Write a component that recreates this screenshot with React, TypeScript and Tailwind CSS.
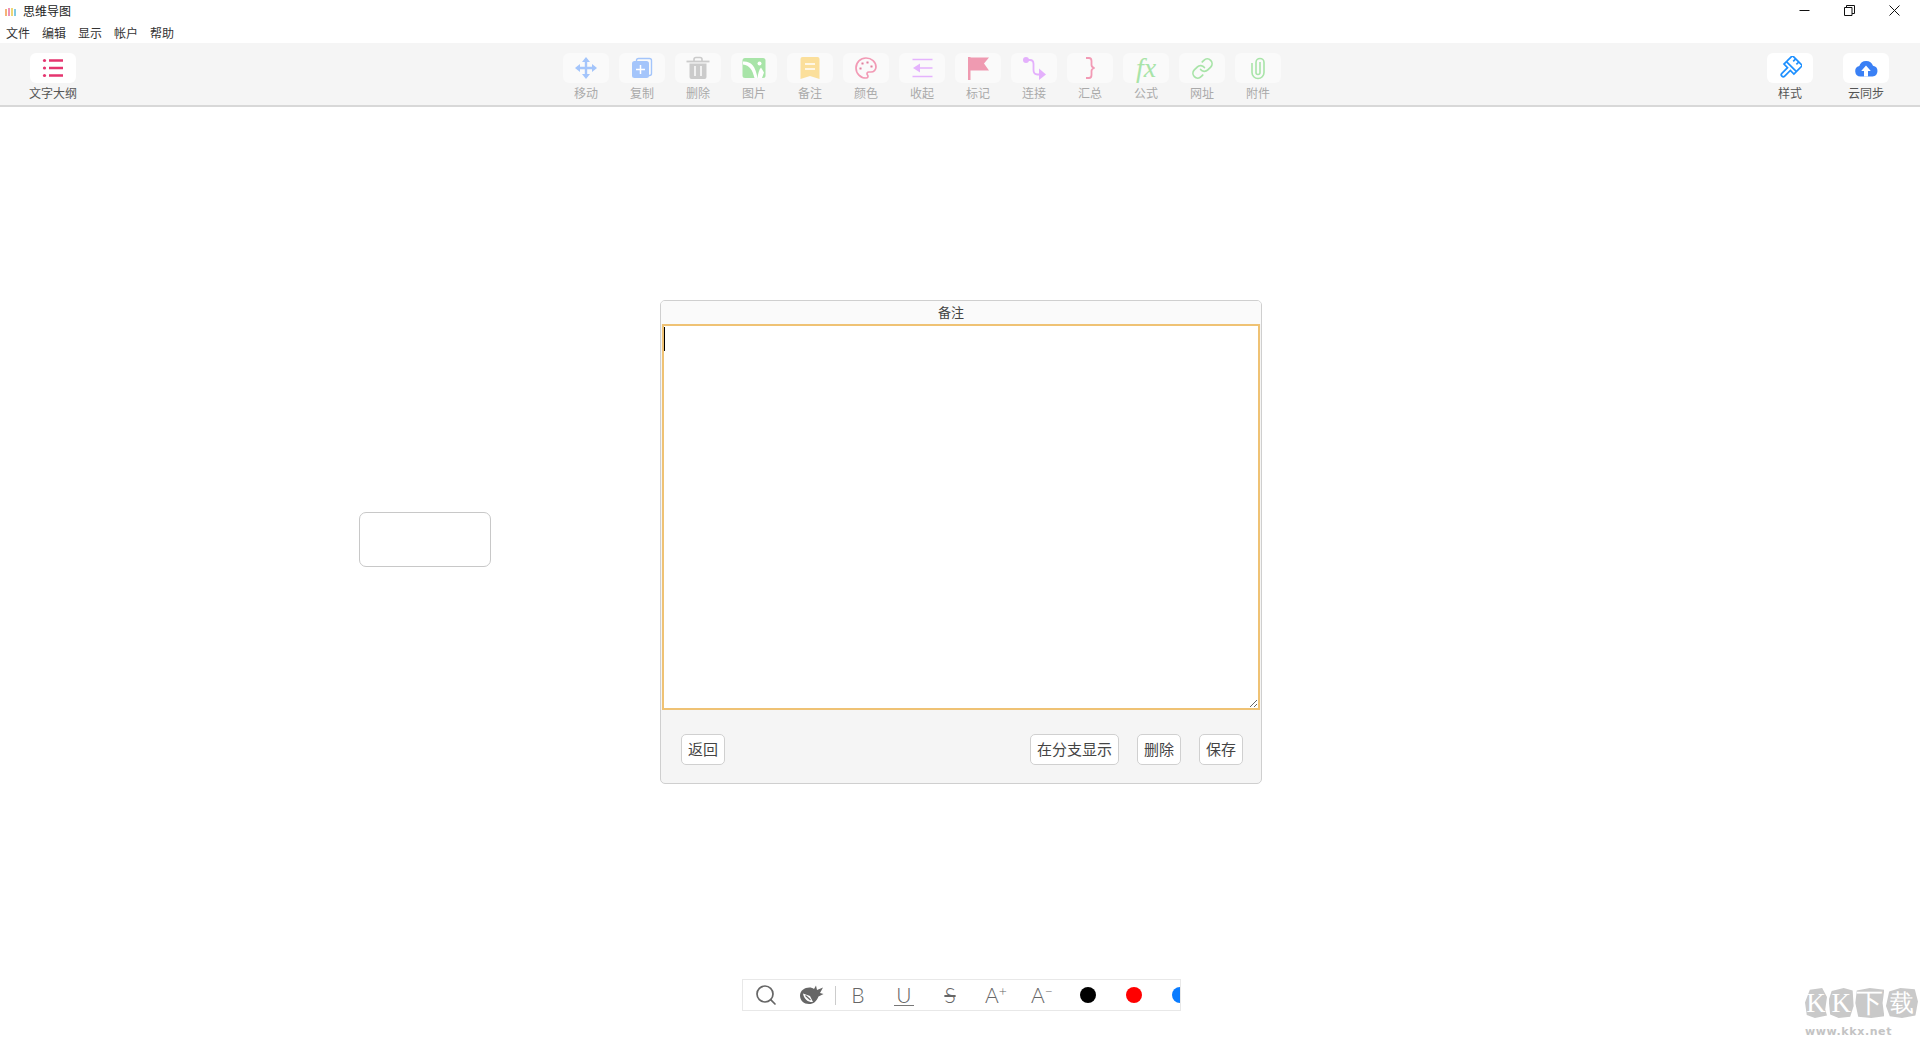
import { ReactNode } from 'react';
import { Link, Palette, Search } from 'lucide-react';

const menus = ['文件', '编辑', '显示', '帐户', '帮助'];

function Tool({ label, icon, active }: { label: string; icon: ReactNode; active?: boolean }) {
  return (
    <div className="flex w-[46px] flex-col items-center">
      <div className={`flex h-[30px] w-[46px] items-center justify-center rounded-[6px] ${active ? 'bg-white' : 'bg-[#fafafa]'}`}>
        {icon}
      </div>
      <span className={`mt-[1px] whitespace-nowrap text-[12px] leading-[18px] ${active ? 'text-[#555]' : 'text-[#aaa]'}`}>
        {label}
      </span>
    </div>
  );
}

const Svg = ({ children }: { children: ReactNode }) => (
  <svg width="24" height="24" viewBox="0 0 24 24" fill="none">{children}</svg>
);

const ListIcon = () => (
  <Svg>
    <path d="M8 4.500h14M8 12h14M8 19.500h14" stroke="#e5356f" strokeWidth="2.600" />
    <circle cx="3.500" cy="4.500" r="1.600" fill="#e5356f" />
    <circle cx="3.500" cy="12" r="1.600" fill="#e5356f" />
    <circle cx="3.500" cy="19.500" r="1.600" fill="#e5356f" />
  </Svg>
);

const MoveIcon = () => (
  <Svg>
    <path d="M12 3v18M3 12h18" stroke="#a4c5fb" strokeWidth="2.400" />
    <path d="M12 1l4 5H8zM12 23l-4-5h8zM1 12l5-4v8zM23 12l-5 4V8z" fill="#a4c5fb" />
  </Svg>
);

const CopyIcon = () => (
  <Svg>
    <rect x="6.500" y="2.500" width="15" height="17" rx="2" stroke="#a4c5fb" strokeWidth="1.400" />
    <rect x="2" y="5" width="17" height="17" rx="2.500" fill="#a4c5fb" />
    <path d="M10.500 9v9M6 13.500h9" stroke="#fff" strokeWidth="1.500" />
  </Svg>
);

const TrashIcon = () => (
  <Svg>
    <path d="M8 5V3.500C8 2 9 1.500 10 1.500h4c1 0 2 .5 2 2V5" stroke="#cbcbcb" strokeWidth="1.600" />
    <path d="M0.500 5.500h23" stroke="#cbcbcb" strokeWidth="1.800" />
    <path d="M3.500 7.500h17V21a2 2 0 0 1-2 2h-13a2 2 0 0 1-2-2z" fill="#cbcbcb" />
    <path d="M9 10v10M15 10v10" stroke="#fafafa" strokeWidth="1.600" />
  </Svg>
);

const ImageIcon = () => (
  <Svg>
    <rect x="0.500" y="2" width="23" height="20" rx="2.500" fill="#a8e4a8" />
    <path d="M1 5.500c7.500-.5 12.500 4 14.500 16.500h-3C10.500 14 7.500 9 1 8.500z" fill="#fff" />
    <path d="M15.500 22c.5-4.500 1.500-8 3.500-10.500l3 5-2 5.500z" fill="#fff" />
    <circle cx="17.500" cy="7.500" r="2" fill="#fff" />
  </Svg>
);

const NoteIcon = () => (
  <Svg>
    <path d="M2.500 3a2 2 0 0 1 2-2h15a2 2 0 0 1 2 2v20L12 20l-9.500 3z" fill="#fbdf9b" />
    <path d="M7 8h10M7 13h10" stroke="#fff" strokeWidth="1.500" />
  </Svg>
);

const CollapseIcon = () => (
  <Svg>
    <path d="M2.500 3.500h20M10 12h12.500M2.500 20.500h20" stroke="#e5b3fd" strokeWidth="1.700" />
    <path d="M3 12l7-4.500v9z" fill="#e5b3fd" />
  </Svg>
);

const FlagIcon = () => (
  <Svg>
    <path d="M2 1h2.500v23H2z" fill="#ef9ab1" />
    <path d="M4 1.500h19l-5 6 5 7H4z" fill="#ef9ab1" />
  </Svg>
);

const ConnectIcon = () => (
  <Svg>
    <circle cx="4" cy="4" r="3" fill="#e4b0fc" />
    <path d="M4 4h4c3 0 3.500 2 3.500 4v6c0 3 1.500 4.500 4 4.500h3" stroke="#e4b0fc" strokeWidth="1.800" />
    <path d="M17 12.500l7 6-7 5.500z" fill="#e4b0fc" />
  </Svg>
);

const BraceIcon = () => (
  <Svg>
    <path d="M8 2h3c2 0 2.500 1.500 2.500 3v4c0 1.500 1 2.500 3 3-2 .5-3 1.500-3 3v4c0 1.500-.5 3-2.500 3H8" stroke="#f29ab5" strokeWidth="1.800" />
  </Svg>
);

const ClipIcon = () => (
  <Svg>
    <path d="M6 7v9.500a6 6 0 0 0 12 0V6.500a4 4 0 0 0-8 0v10a2 2 0 0 0 4 0V6" stroke="#a8e4a8" strokeWidth="1.600" />
  </Svg>
);

const BrushIcon = () => (
  <Svg>
    <g transform="rotate(45 12 12) translate(0 1.500)" stroke="#1e90ff" strokeWidth="1.700">
      <rect x="5" y="0" width="14" height="8.500" rx="1" />
      <path d="M5 8.500V12h5v8a2 2 0 0 0 4 0v-8h5V8.500M9.500 0v3.500M14 0v3.500" />
    </g>
  </Svg>
);

const CloudIcon = () => (
  <Svg>
    <path d="M6.500 20.500a5.300 5.300 0 0 1-1.200-10.460A7.200 7.200 0 0 1 19 9.800a5.400 5.400 0 0 1-.5 10.700z" fill="#3a80f5" />
    <path d="M12 9.500l4.800 5.500h-2.800v5.500h-4V15H7.200z" fill="#fff" />
  </Svg>
);

const EraserIcon = () => (
  <svg width="26" height="20" viewBox="0 0 26 20" fill="none">
    <path d="M1 10.500C1 5.500 5.500 2.500 10.500 2.500c2 0 3 .5 4.500 1.500L17 0.500l1 4.500 6-2.500-3 5.500 3.500 1-5 2.500c-2 5-5 7.500-9.500 7.500C5 19 1 15.500 1 10.500z" fill="#666" />
    <path d="M4 8.500l7 2.500 3 6c-4 .5-9-2-10-8.500z" fill="#fff" />
    <path d="M6.500 10.500l5 4.500" stroke="#666" strokeWidth="1.200" />
  </svg>
);

const BottomCell = ({ children }: { children: ReactNode }) => (
  <div className="flex h-full w-[46px] shrink-0 items-center justify-center text-[#666]">{children}</div>
);

export default function App() {
  return (
    <div className="flex h-[1040px] w-[1920px] flex-col overflow-hidden bg-white font-['Noto_Sans_CJK_SC','Noto_Sans',sans-serif] text-[12px] text-[#333]">
      {/* title + menu */}
      <div className="relative h-[22px] shrink-0">
        <div className="flex h-full items-center pl-[5px]">
          <svg width="11" height="9" viewBox="0 0 11 9" fill="none">
            <path d="M1 9V2" stroke="#f29a4a" strokeWidth="1.500" />
            <path d="M4 9V1" stroke="#e86fa0" strokeWidth="1.500" />
            <path d="M7 9V1" stroke="#e8c84a" strokeWidth="1.500" />
            <path d="M10 9V2" stroke="#58b8d8" strokeWidth="1.500" />
          </svg>
          <span className="ml-[7px] leading-[22px] text-[#222]">思维导图</span>
        </div>
        <div className="absolute right-[3px] top-0 flex h-[21px]">
          <div className="flex w-[45px] items-center justify-center">
            <svg width="11" height="11" viewBox="0 0 11 11"><path d="M0.500 5.500h10" stroke="#111" /></svg>
          </div>
          <div className="flex w-[45px] items-center justify-center">
            <svg width="11" height="11" viewBox="0 0 11 11" fill="none">
              <path d="M0.500 2.500h7.500v8H0.500z" stroke="#111" />
              <path d="M2.500 2.500V0.500h8v8H8" stroke="#111" />
            </svg>
          </div>
          <div className="flex w-[45px] items-center justify-center">
            <svg width="11" height="11" viewBox="0 0 11 11"><path d="M0.500 0.500l10 10M10.500 0.500l-10 10" stroke="#111" /></svg>
          </div>
        </div>
      </div>
      <div className="flex h-[21px] shrink-0 items-center gap-[12px] pl-[6px]">
        {menus.map(m => <span key={m} className="leading-[22px]">{m}</span>)}
      </div>

      {/* toolbar */}
      <div className="flex h-[64px] shrink-0 border-b-2 border-[#d8d8d8] bg-[#f5f5f5] pl-[30px] pt-[10px]">
        <Tool active label="文字大纲" icon={<ListIcon />} />
        <div className="ml-[487px] flex gap-[10px]">
          <Tool label="移动" icon={<MoveIcon />} />
          <Tool label="复制" icon={<CopyIcon />} />
          <Tool label="删除" icon={<TrashIcon />} />
          <Tool label="图片" icon={<ImageIcon />} />
          <Tool label="备注" icon={<NoteIcon />} />
          <Tool label="颜色" icon={<Palette size={24} color="#f29ab5" strokeWidth={1.7} />} />
          <Tool label="收起" icon={<CollapseIcon />} />
          <Tool label="标记" icon={<FlagIcon />} />
          <Tool label="连接" icon={<ConnectIcon />} />
          <Tool label="汇总" icon={<BraceIcon />} />
          <Tool label="公式" icon={<span className="font-['Liberation_Serif',serif] text-[28px] italic leading-none text-[#a8e4a8]">fx</span>} />
          <Tool label="网址" icon={<Link size={23} color="#a8e4a8" strokeWidth={1.8} />} />
          <Tool label="附件" icon={<ClipIcon />} />
        </div>
        <div className="ml-auto flex gap-[30px] pr-[31px]">
          <Tool active label="样式" icon={<BrushIcon />} />
          <Tool active label="云同步" icon={<CloudIcon />} />
        </div>
      </div>

      {/* canvas */}
      <div className="relative flex-1">
        <div className="absolute left-[359px] top-[405px] h-[55px] w-[132px] rounded-[7px] border-[1.5px] border-[#c8c8c8] bg-white" />

        {/* note dialog */}
        <div className="absolute left-[660px] top-[193px] flex h-[484px] w-[602px] flex-col overflow-hidden rounded-[5px] border border-[#cfcfcf] bg-[#f5f5f5]">
          <div className="flex h-[23px] shrink-0 items-center justify-center bg-[#fafafa] pb-px pr-[20px] text-[13px] text-[#444]">备注</div>
          <div className="relative h-[386px] shrink-0 px-px">
            <textarea className="block h-[386px] w-[598px] border-2 border-[#efc274] bg-white caret-transparent outline-none" />
            <span className="absolute left-[3px] top-[3px] h-[24px] w-px bg-black" />
          </div>
          <div className="flex flex-1 items-center pl-[20px] pr-[18px] pt-[5px] text-[15px] text-[#444]">
            <button className="h-[31px] rounded-[5px] border border-[#d0d0d0] bg-white px-[6px]">返回</button>
            <button className="ml-auto h-[31px] rounded-[5px] border border-[#d0d0d0] bg-white px-[6px]">在分支显示</button>
            <button className="ml-[18px] h-[31px] rounded-[5px] border border-[#d0d0d0] bg-white px-[6px]">删除</button>
            <button className="ml-[18px] h-[31px] rounded-[5px] border border-[#d0d0d0] bg-white px-[6px]">保存</button>
          </div>
        </div>

        {/* text format bar */}
        <div className="absolute left-[742px] top-[872px] flex h-[32px] w-[439px] overflow-hidden border border-[#e8e8e8] bg-white">
          <BottomCell><Search size={24} strokeWidth={1.7} /></BottomCell>
          <div className="flex h-full w-[46px] shrink-0 items-center justify-center"><EraserIcon /></div>
          <div className="flex h-full w-0 shrink-0 items-center"><span className="h-[19px] w-px shrink-0 bg-[#ccc]" /></div>
          <BottomCell><span className="font-['Lato',sans-serif] text-[21px] font-light">B</span></BottomCell>
          <BottomCell><span className="border-b border-[#777] px-[2px] font-['Lato',sans-serif] text-[21px] font-light leading-[20px]">U</span></BottomCell>
          <BottomCell><span className="font-['Lato',sans-serif] text-[21px] font-light line-through">S</span></BottomCell>
          <BottomCell>
            <span className="font-['Lato',sans-serif] text-[21px] font-light">A<sup className="text-[14px]">+</sup></span>
          </BottomCell>
          <BottomCell>
            <span className="font-['Lato',sans-serif] text-[21px] font-light">A<sup className="text-[14px]">−</sup></span>
          </BottomCell>
          <BottomCell><span className="h-4 w-4 rounded-full bg-black" /></BottomCell>
          <BottomCell><span className="h-4 w-4 rounded-full bg-[#ff0000]" /></BottomCell>
          <BottomCell><span className="h-4 w-4 rounded-full bg-[#0a7cff]" /></BottomCell>
        </div>

        {/* watermark */}
        <div className="absolute left-[1805px] top-[881px] flex w-[113px] flex-col">
          <div className="flex h-[30px] items-center justify-between font-['Liberation_Serif',serif] text-[27px] text-white">
            <span className="flex h-[30px] w-[22px] items-center justify-center bg-[#c9c9c9] [clip-path:polygon(22%_6%,78%_0%,100%_30%,92%_72%,100%_92%,45%_100%,8%_90%,0%_48%)]">K</span>
            <span className="flex h-[30px] w-[25px] items-center justify-center bg-[#c9c9c9] [clip-path:polygon(12%_10%,60%_0%,96%_8%,100%_60%,86%_96%,40%_100%,6%_88%,0%_40%)]">K</span>
            <span className="flex h-[30px] w-[29px] items-center justify-center bg-[#c9c9c9] [clip-path:polygon(5%_8%,50%_0%,100%_6%,94%_50%,100%_94%,55%_100%,10%_96%,0%_50%)]">下</span>
            <span className="flex h-[30px] w-[32px] items-center justify-center bg-[#c9c9c9] text-[24px] [clip-path:polygon(10%_12%,45%_0%,90%_4%,100%_45%,92%_92%,50%_100%,12%_94%,0%_60%)]">载</span>
          </div>
          <span className="mt-[6px] font-['DejaVu_Sans',sans-serif] text-[11px] font-bold leading-[16px] tracking-[0.6px] text-[#c4c4c4]">www.kkx.net</span>
        </div>
      </div>
    </div>
  );
}
